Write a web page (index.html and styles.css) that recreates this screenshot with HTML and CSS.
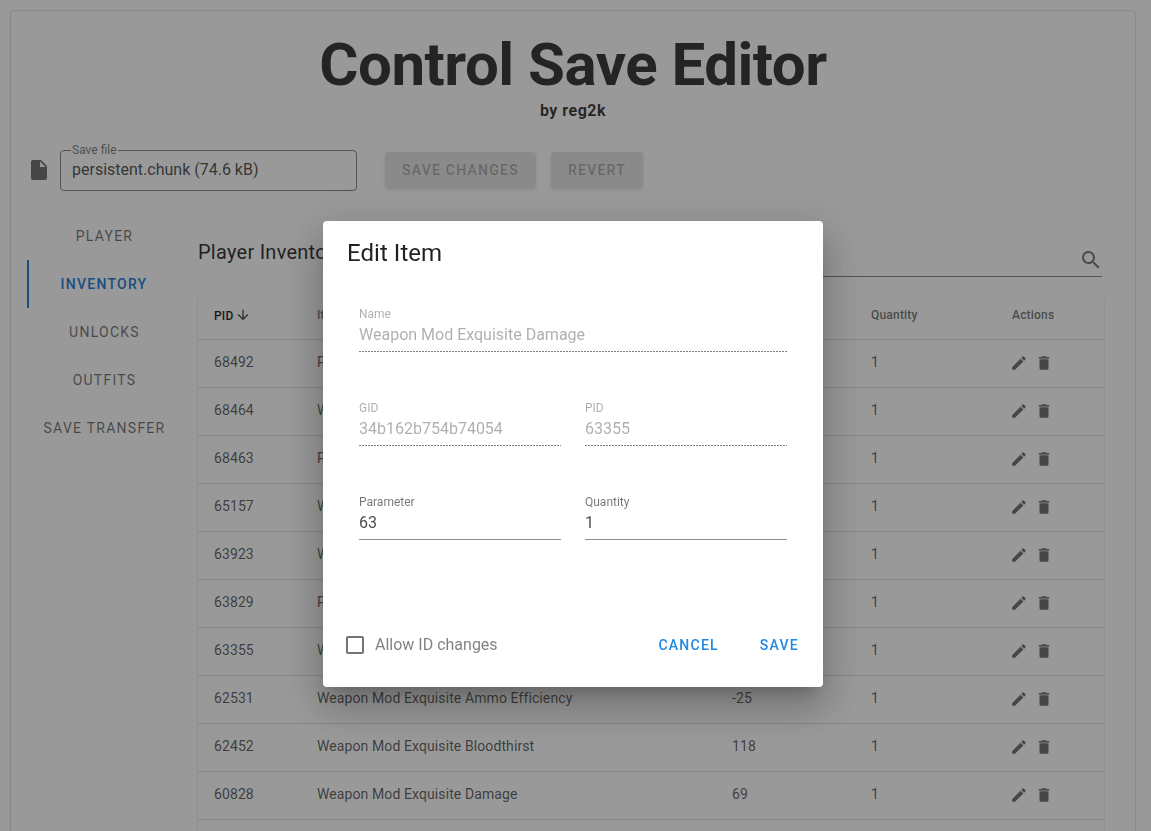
FILE: index.html
```html
<!DOCTYPE html>
<html lang="en">
<head>
<meta charset="utf-8">
<title>Control Save Editor</title>
<link rel="stylesheet" href="styles.css">
</head>
<body>
<main class="paper">
  <h1 class="title">Control Save Editor</h1>
  <p class="byline">by reg2k</p>
  <div class="toolbar">
    <svg class="file-icon" viewBox="0 0 24 24"><path d="M6 2c-1.1 0-1.99.9-1.99 2L4 20c0 1.1.89 2 1.99 2H18c1.1 0 2-.9 2-2V8l-6-6H6zm7 7V3.5L18.5 9H13z"/></svg>
    <fieldset class="save-file"><legend>Save file</legend><span>persistent.chunk (74.6 kB)</span></fieldset>
    <button class="btn-disabled btn-changes">SAVE CHANGES</button>
    <button class="btn-disabled">REVERT</button>
  </div>
  <div class="content">
    <nav class="tabs">
      <a class="tab">PLAYER</a>
      <a class="tab active">INVENTORY</a>
      <a class="tab">UNLOCKS</a>
      <a class="tab">OUTFITS</a>
      <a class="tab">SAVE TRANSFER</a>
    </nav>
    <section class="panel">
      <div class="panel-head">
        <h2>Player Inventory</h2>
        <div class="search">
          <svg class="search-icon" viewBox="0 0 24 24"><path d="M15.5 14h-.79l-.28-.27C15.41 12.59 16 11.11 16 9.5 16 5.91 13.09 3 9.5 3S3 5.91 3 9.5 5.91 16 9.5 16c1.61 0 3.09-.59 4.23-1.57l.27.28v.79l5 4.99L20.49 19l-4.99-5zm-6 0C7.01 14 5 11.99 5 9.5S7.01 5 9.5 5 14 7.01 14 9.5 11.99 14 9.5 14z"/></svg>
        </div>
      </div>
      <table class="items">
        <colgroup><col class="c-pid"><col class="c-item"><col class="c-param"><col class="c-qty"><col class="c-act"></colgroup>
        <thead>
          <tr><th class="th-sorted">PID<svg class="sort" viewBox="0 0 24 24"><path d="M20 12l-1.41-1.41L13 16.17V4h-2v12.17l-5.58-5.59L4 12l8 8 8-8z"/></svg></th><th>Item</th><th>Parameter</th><th>Quantity</th><th>Actions</th></tr>
        </thead>
        <tbody id="rows"></tbody>
      </table>
    </section>
  </div>
</main>

<div class="backdrop"></div>
<div class="dialog" role="dialog">
  <h2 class="dialog-title">Edit Item</h2>
  <div class="form">
    <div class="field disabled"><label>Name</label><div class="value">Weapon Mod Exquisite Damage</div></div>
    <div class="form-row">
      <div class="field disabled"><label>GID</label><div class="value">34b162b754b74054</div></div>
      <div class="field disabled"><label>PID</label><div class="value">63355</div></div>
    </div>
    <div class="form-row">
      <div class="field"><label>Parameter</label><div class="value">63</div></div>
      <div class="field"><label>Quantity</label><div class="value">1</div></div>
    </div>
  </div>
  <div class="dialog-actions">
    <svg class="checkbox" viewBox="0 0 24 24"><path d="M19 5v14H5V5h14m0-2H5c-1.1 0-2 .9-2 2v14c0 1.1.9 2 2 2h14c1.1 0 2-.9 2-2V5c0-1.1-.9-2-2-2z"/></svg>
    <span class="check-label">Allow ID changes</span>
    <button class="btn-text btn-cancel">CANCEL</button>
    <button class="btn-text">SAVE</button>
  </div>
</div>
<script src="app.js"></script>
</body>
</html>
```
FILE: styles.css
```css
* { box-sizing: border-box; }
html, body { height: 100%; }
body {
  margin: 0;
  padding: 10px 15px 0 10px;
  height: 831px;
  overflow: hidden;
  background: #fff;
  font-family: Roboto, "Liberation Sans", sans-serif;
  color: rgba(0, 0, 0, .87);
}
.paper {
  border: 1px solid #e4e4e4;
  border-radius: 4px;
  padding: 18px 0 0 16px;
  height: 900px;
  box-shadow: 0 1px 2px rgba(0, 0, 0, .06);
}
.title {
  margin: 0 16px 0 0;
  text-align: center;
  font-size: 60px;
  line-height: 72px;
  font-weight: 700;
  letter-spacing: -.5px;
  color: rgba(0, 0, 0, .76);
}
.byline {
  margin: -2px 16px 0 0;
  text-align: center;
  font-size: 16px;
  line-height: 24px;
  font-weight: 700;
  letter-spacing: .5px;
  color: rgba(0, 0, 0, .76);
}
.toolbar {
  display: flex;
  align-items: center;
  margin-top: 26px;
  height: 42px;
}
.file-icon { width: 24px; height: 24px; fill: #757575; flex: none; }
.save-file {
  flex: none;
  width: 297px;
  height: 45px;
  margin: -3px 28px 0 9px;
  padding: 0 11px;
  border: 1px solid #8a8a8a;
  border-radius: 4px;
  font-size: 16px;
  line-height: 36px;
  color: rgba(0, 0, 0, .68);
}
.save-file legend {
  font-size: 12px;
  line-height: 9px;
  padding: 0 1px;
  margin-left: -1px;
  color: rgba(0, 0, 0, .5);
}
.save-file span { display: block; margin-top: -3px; }
.btn-disabled {
  height: 36px;
  padding: 0 17px;
  border: 0;
  border-radius: 4px;
  background: #e6e6e6;
  color: rgba(0, 0, 0, .26);
  font: 500 14px/36px Roboto, sans-serif;
  letter-spacing: 1.25px;
  box-shadow: 0 2px 3px rgba(0, 0, 0, .07), 0 1px 5px rgba(0, 0, 0, .05);
}
.btn-changes { margin-right: 15px; }
.content { display: flex; margin-top: 21px; }
.tabs { flex: none; width: 155px; display: flex; flex-direction: column; margin-right: 16px; }
.tab {
  height: 48px;
  display: flex;
  align-items: center;
  justify-content: center;
  font-size: 14px;
  letter-spacing: 1.25px;
  color: rgba(0, 0, 0, .55);
}
.tab.active {
  color: #2f80d8;
  font-weight: 500;
  border-left: 2px solid #2f80d8;
  padding-right: 3px;
}
.panel { flex: none; width: 906px; }
.panel-head { display: flex; height: 84px; }
.panel-head h2 {
  margin: 26px 0 0;
  font-size: 20px;
  line-height: 28px;
  font-weight: 400;
  letter-spacing: .25px;
  white-space: nowrap;
  color: rgba(0, 0, 0, .8);
}
.search {
  flex: 1;
  height: 55px;
  margin: 10px 2px 0 0;
  border-bottom: 1px solid #8a8a8a;
  display: flex;
  justify-content: flex-end;
  align-items: flex-end;
  padding-bottom: 4px;
}
.search-icon { width: 24px; height: 24px; fill: #7d7d7d; margin-right: -1px; }
.items {
  width: 906px;
  table-layout: fixed;
  border-collapse: collapse;
  font-size: 14px;
  box-shadow: 0 1px 2px rgba(0, 0, 0, .14);
}
.c-pid { width: 103px; }
.c-item { width: 415px; }
.c-param { width: 139px; }
.c-qty { width: 141px; }
.c-act { width: 108px; }
.items th, .items td {
  padding: 0 16px;
  border-bottom: 1px solid #e0e0e0;
  text-align: left;
  letter-spacing: .1px;
  white-space: nowrap;
}
.items th {
  height: 43px;
  padding-bottom: 4px;
  font-size: 12px;
  font-weight: 500;
  letter-spacing: .2px;
  color: rgba(0, 0, 0, .55);
}
.items th.th-sorted { color: rgba(0, 0, 0, .85); }
.items td { height: 48px; padding-bottom: 2px; color: rgba(0, 0, 0, .62); }
.items td:last-child { padding-bottom: 0; }
.sort { width: 16px; height: 16px; fill: rgba(0, 0, 0, .7); vertical-align: -3.5px; margin-left: 1px; }
.actions { display: flex; gap: 7px; margin-left: -2px; }
.actions svg { width: 18px; height: 18px; fill: #757575; }
.backdrop { position: fixed; inset: 0; background: rgba(0, 0, 0, .4); }
.dialog {
  position: fixed;
  left: 323px;
  top: 221px;
  width: 500px;
  height: 466px;
  display: flex;
  flex-direction: column;
  background: #fff;
  border-radius: 4px;
  box-shadow: 0 11px 15px -7px rgba(0, 0, 0, .2), 0 24px 38px 3px rgba(0, 0, 0, .14), 0 9px 46px 8px rgba(0, 0, 0, .12);
}
.dialog-title {
  margin: 0;
  padding: 16px 24px 0;
  font-size: 24px;
  line-height: 32px;
  font-weight: 400;
  letter-spacing: .05px;
}
.form { flex: 1; padding: 38px 36px 0; display: flex; flex-direction: column; gap: 49px; }
.form-row { display: flex; gap: 24px; }
.form-row .field { flex: 1; }
.field label { display: block; font-size: 12px; line-height: 14px; color: rgba(0, 0, 0, .54); }
.field .value {
  height: 31px;
  padding-top: 2px;
  font-size: 16px;
  line-height: 24px;
  color: rgba(0, 0, 0, .72);
  border-bottom: 1px solid #8f8f8f;
}
.field.disabled label { color: rgba(0, 0, 0, .32); }
.field.disabled .value {
  color: rgba(0, 0, 0, .32);
  border-bottom: 1px solid transparent;
  background: linear-gradient(to right, rgba(0, 0, 0, .5) 66%, transparent 0%) left bottom / 3px 1px repeat-x border-box;
}
.dialog-actions {
  display: flex;
  align-items: center;
  height: 40px;
  margin-bottom: 22px;
  padding: 0 24px 0 20px;
}
.checkbox { width: 24px; height: 24px; fill: #757575; flex: none; }
.check-label { margin-left: 8px; padding-bottom: 2px; font-size: 16px; color: rgba(0, 0, 0, .5); }
.btn-text {
  border: 0;
  padding: 0;
  background: none;
  color: #1e88e5;
  font: 500 14px/36px Roboto, sans-serif;
  letter-spacing: 1.25px;
}
.btn-cancel { margin-left: auto; margin-right: 41px; }
```
FILE: app.js
```js
const rows = [
  ["68492", "Personal Mod", "", "1"],
  ["68464", "Weapon Mod", "", "1"],
  ["68463", "Personal Mod", "", "1"],
  ["65157", "Weapon Mod", "", "1"],
  ["63923", "Weapon Mod", "", "1"],
  ["63829", "Personal Mod", "", "1"],
  ["63355", "Weapon Mod Exquisite Damage", "63", "1"],
  ["62531", "Weapon Mod Exquisite Ammo Efficiency", "-25", "1"],
  ["62452", "Weapon Mod Exquisite Bloodthirst", "118", "1"],
  ["60828", "Weapon Mod Exquisite Damage", "69", "1"]
];
const icons = '<div class="actions"><svg viewBox="0 0 24 24"><path d="M3 17.25V21h3.75L17.81 9.94l-3.75-3.75L3 17.25zM20.71 7.04c.39-.39.39-1.02 0-1.41l-2.34-2.34c-.39-.39-1.02-.39-1.41 0l-1.83 1.83 3.75 3.75 1.83-1.83z"/></svg><svg viewBox="0 0 24 24"><path d="M6 19c0 1.1.9 2 2 2h8c1.1 0 2-.9 2-2V7H6v12zM19 4h-3.5l-1-1h-5l-1 1H5v2h14V4z"/></svg></div>';
document.getElementById("rows").innerHTML = rows.map(r =>
  "<tr>" + r.map(c => "<td>" + c + "</td>").join("") + "<td>" + icons + "</td></tr>"
).join("") + '<tr><td colspan="5"></td></tr>';
```
